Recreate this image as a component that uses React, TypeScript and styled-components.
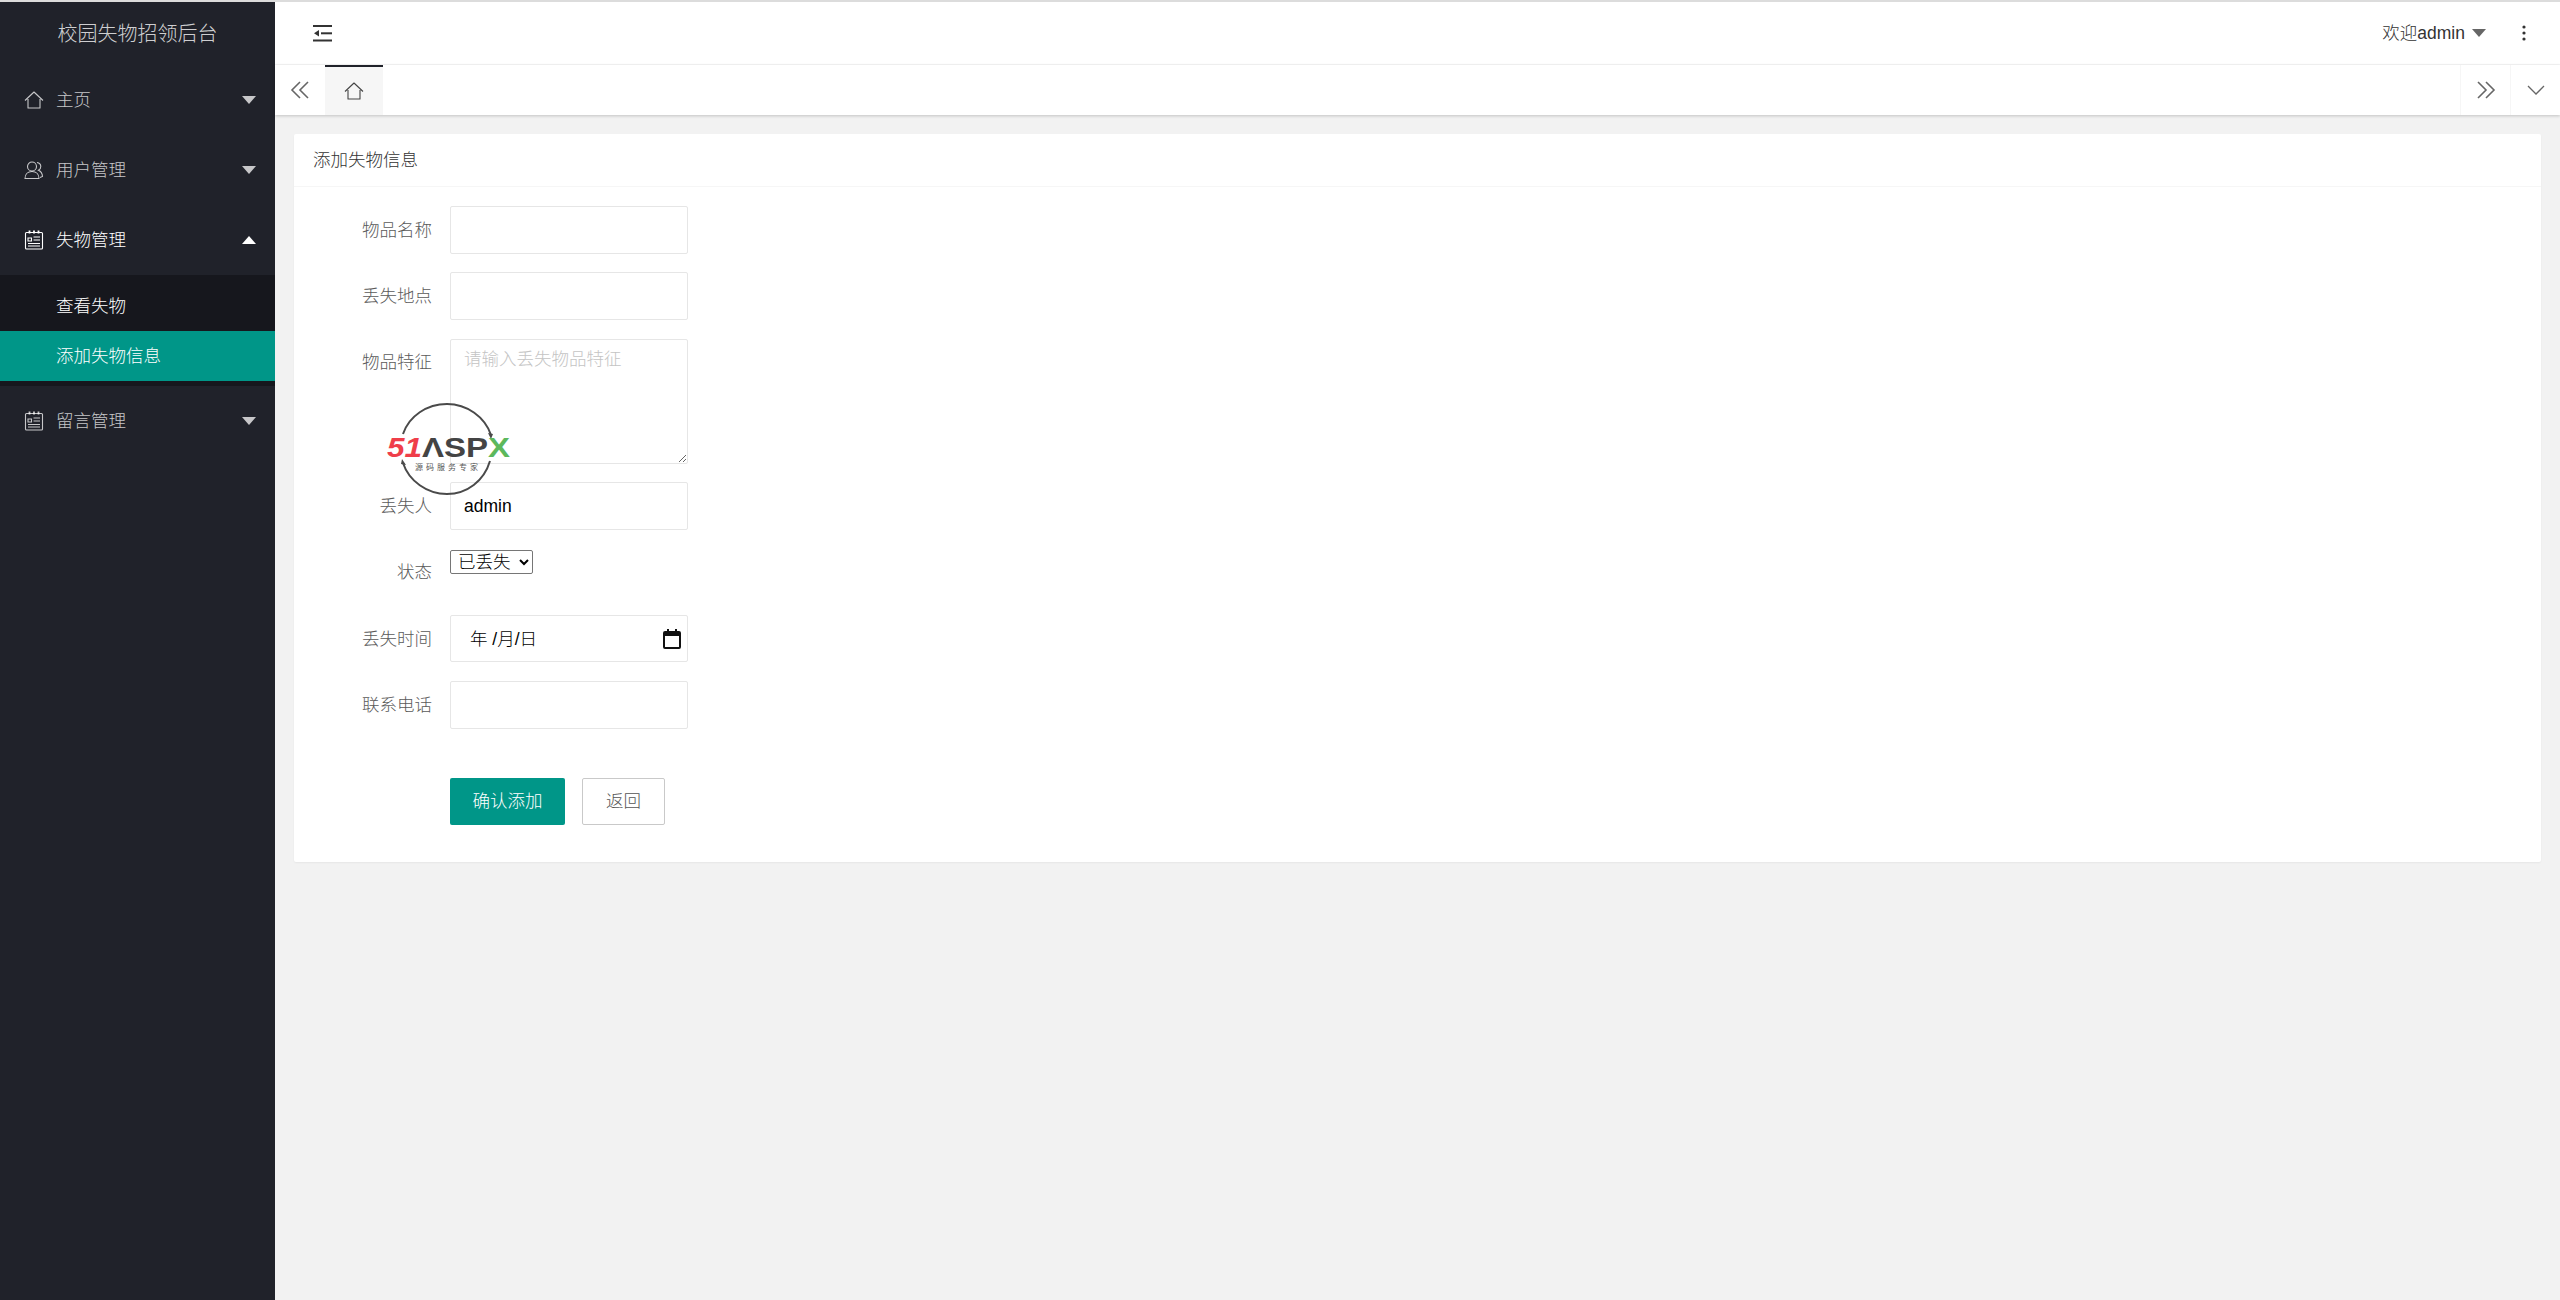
import React from 'react';
import styled, { createGlobalStyle } from 'styled-components';

const FONT = `"Liberation Sans", "Noto Sans CJK SC", sans-serif`;

const GlobalStyle = createGlobalStyle`
  html, body {
    margin: 0;
    padding: 0;
    background: #f2f2f2;
    font-family: ${FONT};
  }
  * {
    box-sizing: border-box;
  }
`;

const Page = styled.div`
  width: 2560px;
  height: 1300px;
  display: flex;
  flex-direction: column;
  overflow: hidden;
`;

const TopLine = styled.div`
  height: 2px;
  flex: none;
  background: #dcdcdc;
`;

const Shell = styled.div`
  flex: 1;
  display: flex;
  min-height: 0;
`;

const Sidebar = styled.aside`
  width: 275px;
  flex: none;
  background: #20222a;
  display: flex;
  flex-direction: column;
`;

const Logo = styled.div`
  height: 63px;
  display: flex;
  align-items: center;
  justify-content: center;
  padding-bottom: 3px;
  font-size: 20px;
  font-weight: 300;
  color: rgba(255, 255, 255, 0.8);
`;

const MenuItem = styled.div<{ $open?: boolean }>`
  height: 70px;
  display: flex;
  align-items: center;
  padding: 0 19px 0 24px;
  font-size: 17.5px;
  font-weight: 300;
  color: ${(p) => (p.$open ? '#fff' : 'rgba(255, 255, 255, 0.75)')};
`;

const MenuIcon = styled.svg`
  width: 20px;
  height: 20px;
  margin-right: 12px;
  flex: none;
  fill: none;
  stroke: currentColor;
  stroke-width: 1.1;
`;

const MenuLabel = styled.span`
  flex: 1;
  padding-bottom: 3px;
`;

const Caret = styled.i<{ $up?: boolean; $color?: string }>`
  width: 0;
  height: 0;
  border-left: 7.5px solid transparent;
  border-right: 7.5px solid transparent;
  border-top: ${(p) => (p.$up ? '0' : `8px solid ${p.$color || 'currentColor'}`)};
  border-bottom: ${(p) => (p.$up ? `8px solid ${p.$color || 'currentColor'}` : '0')};
`;

const SubMenu = styled.div`
  background: #16171d;
  padding: 6px 0 5px;
`;

const SubItem = styled.div<{ $active?: boolean }>`
  height: 50px;
  display: flex;
  align-items: center;
  padding: 0 0 3px 56px;
  font-size: 17.5px;
  font-weight: 300;
  color: #fff;
  background: ${(p) => (p.$active ? '#009688' : 'transparent')};
`;

const Main = styled.main`
  flex: 1;
  min-width: 0;
  display: flex;
  flex-direction: column;
`;

const Header = styled.header`
  height: 63px;
  flex: none;
  background: #fff;
  border-bottom: 1px solid #f6f6f6;
  display: flex;
  align-items: center;
  justify-content: space-between;
  padding: 0 33px 0 38px;
`;

const HeaderRight = styled.div`
  display: flex;
  align-items: center;
  color: #333;
  font-size: 17.5px;
  font-weight: 300;
`;

const Welcome = styled.span`
  margin-right: 7px;
  padding-bottom: 3px;
`;

const Dots = styled.svg`
  width: 6px;
  height: 16px;
  margin-left: 35px;
  fill: #333;
`;

const TabBar = styled.nav`
  height: 50px;
  flex: none;
  background: #fff;
  display: flex;
  box-shadow: 0 1px 3px rgba(0, 0, 0, 0.2);
  position: relative;
`;

const TabArrow = styled.div<{ $bordered?: boolean }>`
  width: 50px;
  flex: none;
  display: flex;
  align-items: center;
  justify-content: center;
  color: #666;
  border-left: ${(p) => (p.$bordered ? '1px solid #f6f6f6' : '0')};
`;

const HomeTab = styled.div`
  width: 58px;
  flex: none;
  display: flex;
  align-items: center;
  justify-content: center;
  background: #f6f6f6;
  border-top: 2px solid #20222a;
  color: #444;
`;

const TabSpacer = styled.div`
  flex: 1;
`;

const LineIcon = styled.svg<{ $weight?: number }>`
  fill: none;
  stroke: currentColor;
  stroke-width: ${(p) => p.$weight || 1.6};
`;

const Content = styled.div`
  flex: 1;
  min-height: 0;
  padding: 19px 19px 0 19px;
`;

const Card = styled.section`
  position: relative;
  background: #fff;
  border-radius: 2px;
  box-shadow: 0 1px 2px rgba(0, 0, 0, 0.05);
`;

const CardHeader = styled.div`
  height: 53px;
  display: flex;
  align-items: center;
  padding: 0 19px 3px;
  font-size: 17.5px;
  font-weight: 300;
  color: #333;
  border-bottom: 1px solid #f6f6f6;
`;

const Form = styled.form`
  padding: 19px 0 37px;
`;

const FormRow = styled.div`
  display: flex;
  align-items: flex-start;
  margin-bottom: 18.75px;
`;

const FieldLabel = styled.label`
  width: 138px;
  height: 47.5px;
  margin-right: 18px;
  padding-bottom: 3px;
  flex: none;
  display: flex;
  align-items: center;
  justify-content: flex-end;
  font-size: 17.5px;
  font-weight: 300;
  color: #5a5a5a;
`;

const TextInput = styled.input`
  width: 238px;
  height: 47.5px;
  padding: 0 13px;
  border: 1px solid #e6e6e6;
  border-radius: 2px;
  background: #fff;
  font-family: ${FONT};
  font-size: 17.5px;
  color: #000;
  outline: none;
`;

const TextArea = styled.textarea`
  display: block;
  width: 238px;
  height: 125px;
  padding: 7px 13px;
  border: 1px solid #e6e6e6;
  border-radius: 2px;
  background: #fff;
  font-family: ${FONT};
  font-size: 17.5px;
  font-weight: 300;
  line-height: 25px;
  outline: none;

  &::placeholder {
    color: #c4c4c4;
  }
`;

const StatusSelect = styled.select`
  width: 83px;
  height: 24px;
  margin-top: 1px;
  font-family: ${FONT};
  font-size: 17.5px;
  font-weight: 300;
  color: #000;
  background: #fff;
  border: 1px solid #767676;
  border-radius: 2px;
  padding: 0 0 0 3px;
`;

const DateField = styled.div`
  width: 238px;
  height: 47.5px;
  padding: 0 6px 3px 19px;
  border: 1px solid #e6e6e6;
  border-radius: 2px;
  display: flex;
  align-items: center;
  justify-content: space-between;
  font-size: 17.5px;
  font-weight: 300;
  color: #000;
`;

const CalendarIcon = styled.svg`
  width: 18px;
  height: 20px;
  margin-top: 3px;
  fill: #111;
`;

const Actions = styled.div`
  display: flex;
  gap: 17px;
  margin: 49px 0 0 156px;
`;

const SaveButton = styled.button`
  width: 115px;
  height: 47.5px;
  border: 0;
  border-radius: 2px;
  background: #009688;
  color: #fff;
  font-family: ${FONT};
  font-size: 17.5px;
  font-weight: 300;
  padding: 0 0 3px;
`;

const BackButton = styled.button`
  width: 83px;
  height: 47.5px;
  border: 1px solid #c9c9c9;
  border-radius: 2px;
  background: #fff;
  color: #555;
  font-family: ${FONT};
  font-size: 17.5px;
  font-weight: 300;
  padding: 0 0 3px;
`;

const Watermark = styled.svg`
  position: absolute;
  left: 93px;
  top: 269px;
  width: 126px;
  height: 92px;
`;

const HomeGlyph = () => (
  <path d="M1 10.500 10 2l9 8.500M4 9v9h12V9" strokeLinejoin="round" />
);

const UserGlyph = () => (
  <>
    <circle cx="8" cy="6.500" r="4.500" />
    <path d="M1 18.500c0-4.500 3-7 7-7s7 2.500 7 7zM13 2.500c2.500.5 3.800 2 3.800 4 0 1.600-.8 3-2.300 3.700 2.300 1 3.800 3 4 6.300l-2.500 1" />
  </>
);

const NotesGlyph = () => (
  <>
    <rect x="1.500" y="2.500" width="17" height="16.500" rx="1" />
    <path d="M5.500.5v3M10 .5v3M14.500.5v3" strokeWidth="1.800" />
    <path d="M4 8h3.500v3H4zM9.500 7h6.500M9.500 10h6.500M4 13.500h12M4 16h12" />
  </>
);

const App = () => {
  return (
    <Page>
      <GlobalStyle />
      <TopLine />
      <Shell>
        <Sidebar>
          <Logo>校园失物招领后台</Logo>
          <MenuItem>
            <MenuIcon viewBox="0 0 20 20"><HomeGlyph /></MenuIcon>
            <MenuLabel>主页</MenuLabel>
            <Caret />
          </MenuItem>
          <MenuItem>
            <MenuIcon viewBox="0 0 20 20"><UserGlyph /></MenuIcon>
            <MenuLabel>用户管理</MenuLabel>
            <Caret />
          </MenuItem>
          <MenuItem $open>
            <MenuIcon viewBox="0 0 20 20"><NotesGlyph /></MenuIcon>
            <MenuLabel>失物管理</MenuLabel>
            <Caret $up />
          </MenuItem>
          <SubMenu>
            <SubItem>查看失物</SubItem>
            <SubItem $active>添加失物信息</SubItem>
          </SubMenu>
          <MenuItem>
            <MenuIcon viewBox="0 0 20 20"><NotesGlyph /></MenuIcon>
            <MenuLabel>留言管理</MenuLabel>
            <Caret />
          </MenuItem>
        </Sidebar>

        <Main>
          <Header>
            <svg width="20" height="17" viewBox="0 0 20 17" fill="#333">
              <rect x="0" y="0" width="19" height="2" />
              <rect x="0" y="14.500" width="19" height="2" />
              <rect x="8" y="7.300" width="11" height="2" />
              <path d="M1 8.300 6 5v6.600z" />
            </svg>
            <HeaderRight>
              <Welcome>欢迎admin</Welcome>
              <Caret $color="#666" />
              <Dots viewBox="0 0 6 16">
                <circle cx="3" cy="2" r="1.600" />
                <circle cx="3" cy="8" r="1.600" />
                <circle cx="3" cy="14" r="1.600" />
              </Dots>
            </HeaderRight>
          </Header>

          <TabBar>
            <TabArrow>
              <LineIcon width="20" height="18" viewBox="0 0 20 18">
                <path d="M10 1 2 9l8 8M18 1l-8 8 8 8" />
              </LineIcon>
            </TabArrow>
            <HomeTab>
              <LineIcon width="22" height="20" viewBox="0 0 20 20" $weight={1.1}>
                <HomeGlyph />
              </LineIcon>
            </HomeTab>
            <TabSpacer />
            <TabArrow $bordered>
              <LineIcon width="20" height="18" viewBox="0 0 20 18">
                <path d="m2 1 8 8-8 8M10 1l8 8-8 8" />
              </LineIcon>
            </TabArrow>
            <TabArrow $bordered>
              <LineIcon width="20" height="12" viewBox="0 0 20 12" $weight={1.3}>
                <path d="m2 2 8 8 8-8" />
              </LineIcon>
            </TabArrow>
          </TabBar>

          <Content>
            <Card>
              <CardHeader>添加失物信息</CardHeader>
              <Form>
                <FormRow>
                  <FieldLabel>物品名称</FieldLabel>
                  <TextInput type="text" />
                </FormRow>
                <FormRow>
                  <FieldLabel>丢失地点</FieldLabel>
                  <TextInput type="text" />
                </FormRow>
                <FormRow>
                  <FieldLabel>物品特征</FieldLabel>
                  <TextArea placeholder="请输入丢失物品特征" />
                </FormRow>
                <FormRow>
                  <FieldLabel>丢失人</FieldLabel>
                  <TextInput type="text" defaultValue="admin" />
                </FormRow>
                <FormRow>
                  <FieldLabel>状态</FieldLabel>
                  <StatusSelect defaultValue="lost">
                    <option value="lost">已丢失</option>
                  </StatusSelect>
                </FormRow>
                <FormRow>
                  <FieldLabel>丢失时间</FieldLabel>
                  <DateField>
                    <span>年 /月/日</span>
                    <CalendarIcon viewBox="0 0 18 20">
                      <path d="M4 0h2v2h6V0h2v2h2a2 2 0 0 1 2 2v14a2 2 0 0 1-2 2H2a2 2 0 0 1-2-2V4a2 2 0 0 1 2-2h2zM2 7v11h14V7z" />
                    </CalendarIcon>
                  </DateField>
                </FormRow>
                <FormRow>
                  <FieldLabel>联系电话</FieldLabel>
                  <TextInput type="text" />
                </FormRow>
                <Actions>
                  <SaveButton type="button">确认添加</SaveButton>
                  <BackButton type="button">返回</BackButton>
                </Actions>
              </Form>

              <Watermark viewBox="0 0 126 92">
                <path d="M16 31C22 13 40 1 60 1c20 0 38 13 44 31" fill="none" stroke="#4a4a4a" strokeWidth="2" />
                <path d="M16 60c6 18 24 31 44 31 20 0 37-13 43-33" fill="none" stroke="#4a4a4a" strokeWidth="2" />
                <path d="m101 30 5 1-2 5zM19 62l-5-1 1-5z" fill="#4a4a4a" />
                <text x="0" y="54" fontFamily="Liberation Sans" fontWeight="700" fontStyle="italic" fontSize="28" fill="#ef3e4a" textLength="35" lengthAdjust="spacingAndGlyphs">51</text>
                <text x="35" y="54" fontFamily="Liberation Sans" fontWeight="700" fontSize="27" fill="#444" textLength="66" lengthAdjust="spacingAndGlyphs">ΛSP</text>
                <text x="101" y="54" fontFamily="Liberation Sans" fontWeight="700" fontSize="27" fill="#5cb85c" textLength="22" lengthAdjust="spacingAndGlyphs">X</text>
                <text x="28" y="67" fontFamily="Noto Sans CJK SC" fontSize="8" fill="#555" textLength="63">源码服务专家</text>
              </Watermark>
            </Card>
          </Content>
        </Main>
      </Shell>
    </Page>
  );
};

export default App;
